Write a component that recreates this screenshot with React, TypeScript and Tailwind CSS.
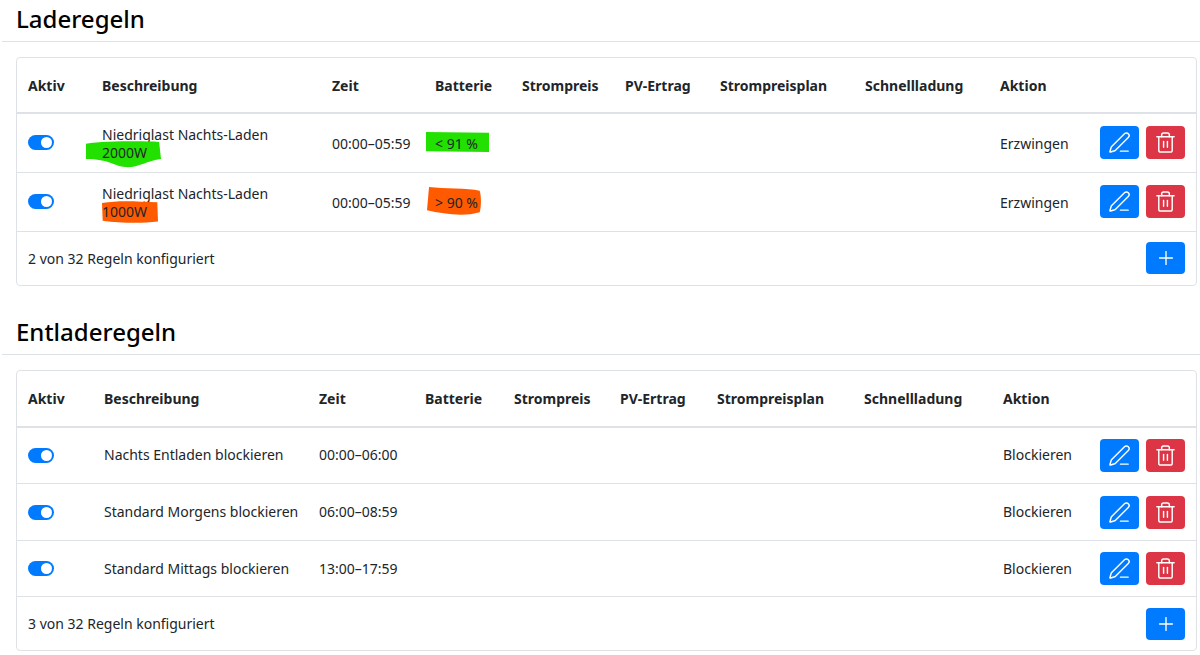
import { PenLine, Plus, Trash2 } from "lucide-react";
import type { ReactNode } from "react";

const Toggle = () => (
  <div className="flex h-[15px] w-[26px] items-center justify-end rounded-full bg-[#007bff] pr-[2px]">
    <div className="h-[11px] w-[11px] rounded-full bg-white" />
  </div>
);

const Actions = () => (
  <div className="flex justify-end gap-[7px]">
    <button className="flex h-[33px] w-[39px] shrink-0 items-center justify-center rounded-[4px] bg-[#007bff] text-white">
      <PenLine size={23} strokeWidth={1.5} />
    </button>
    <button className="flex h-[33px] w-[39px] shrink-0 items-center justify-center rounded-[4px] bg-[#dc3545] text-white">
      <Trash2 size={23} strokeWidth={1.5} />
    </button>
  </div>
);

const Marker = ({ d, color, className }: { d: string; color: string; className: string }) => (
  <svg className={`absolute ${className}`} viewBox="0 0 80 30" preserveAspectRatio="none">
    <path d={d} fill={color} />
  </svg>
);

const headers = ["Aktiv", "Beschreibung", "Zeit", "Batterie", "Strompreis", "PV-Ertrag", "Strompreisplan", "Schnellladung", "Aktion", ""];

interface Rule {
  desc: ReactNode;
  time: string;
  battery?: ReactNode;
  action: string;
  rowClass: string;
}

const RuleTable = ({
  cols,
  headClass,
  textClass,
  rows,
  footer,
}: {
  cols: string[];
  headClass: string;
  textClass: string;
  rows: Rule[];
  footer: string;
}) => (
  <div className="ml-4 mr-[3px] rounded-[4px] border border-[#dee2e6]">
    <table className="w-full table-fixed border-collapse">
      <colgroup>
        {cols.map((c, i) => (
          <col key={i} className={c} />
        ))}
      </colgroup>
      <thead>
        <tr className={`border-b-2 border-[#dee2e6] ${headClass}`}>
          {headers.map((h, i) => (
            <th key={i} className="whitespace-nowrap px-[11px] pt-[2px] text-left align-middle font-bold">
              {h}
            </th>
          ))}
        </tr>
      </thead>
      <tbody>
        {rows.map((r, i) => (
          <tr key={i} className={`border-b border-[#dee2e6] ${r.rowClass}`}>
            <td className="px-[11px] align-middle">
              <Toggle />
            </td>
            <td className={`whitespace-nowrap px-[11px] align-middle ${textClass}`}>{r.desc}</td>
            <td className={`whitespace-nowrap px-[11px] align-middle ${textClass}`}>{r.time}</td>
            <td className={`whitespace-nowrap px-[11px] align-middle ${textClass}`}>{r.battery}</td>
            <td />
            <td />
            <td />
            <td />
            <td className={`px-[11px] align-middle ${textClass}`}>{r.action}</td>
            <td className="px-[11px] align-middle">
              <Actions />
            </td>
          </tr>
        ))}
      </tbody>
    </table>
    <div className="flex h-[53px] items-center justify-between px-[11px]">
      <span className={textClass}>{footer}</span>
      <button className="flex h-[32px] w-[39px] items-center justify-center rounded-[4px] bg-[#007bff] text-white">
        <Plus size={22} strokeWidth={1.5} />
      </button>
    </div>
  </div>
);

export default function App() {
  return (
    <div className="h-[655px] overflow-hidden bg-white text-[14px] leading-[18px] text-[#212529] [font-family:'Noto_Sans',sans-serif]">
      {/* Laderegeln */}
      <h2 className="ml-[2px] h-[42px] border-b border-[#dee2e6] pl-[14px] text-[24px] leading-[38px] font-medium text-black">
        Laderegeln
      </h2>
      <div className="h-[15px]" />
      <RuleTable
        cols={["w-[74px]", "w-[230px]", "w-[103px]", "w-[87px]", "w-[103px]", "w-[95px]", "w-[145px]", "w-[135px]", "w-[100px]", ""]}
        headClass="h-[55px]"
        textClass="pt-[2px]"
        footer="2 von 32 Regeln konfiguriert"
        rows={[
          {
            desc: (
              <div>
                Niedriglast Nachts-Laden
                <div className="relative">
                  <Marker
                    className="left-[-16px] top-[-3px] h-[27px] w-[75px]"
                    color="#22e000"
                    d="M0 3 C20 0 60 0 78 1 L80 20 C65 22 55 30 42 29 C30 28 25 20 0 20 Z"
                  />
                  <span className="relative">2000W</span>
                </div>
              </div>
            ),
            time: "00:00–05:59",
            battery: (
              <div className="relative">
                <Marker
                  className="left-[-9px] top-[-3px] h-[20px] w-[63px]"
                  color="#22e000"
                  d="M0 0 L80 1 L80 30 L0 29 Z"
                />
                <span className="relative">&lt; 91 %</span>
              </div>
            ),
            action: "Erzwingen",
            rowClass: "h-[59px]",
          },
          {
            desc: (
              <div>
                Niedriglast Nachts-Laden
                <div className="relative">
                  <Marker
                    className="left-0 top-[-3px] h-[23px] w-[56px]"
                    color="#ff5a00"
                    d="M0 4 C25 0 50 2 79 3 L80 28 C55 31 25 30 1 27 Z"
                  />
                  <span className="relative">1000W</span>
                </div>
              </div>
            ),
            time: "00:00–05:59",
            battery: (
              <div className="relative">
                <Marker
                  className="left-[-8px] top-[-7px] h-[28px] w-[54px]"
                  color="#ff5a00"
                  d="M3 0 C25 2 60 1 78 4 C81 10 80 24 78 27 C55 32 25 29 0 25 Z"
                />
                <span className="relative">&gt; 90 %</span>
              </div>
            ),
            action: "Erzwingen",
            rowClass: "h-[59px]",
          },
        ]}
      />

      {/* Entladeregeln */}
      <h2 className="mt-[26px] ml-[2px] h-[43px] border-b border-[#dee2e6] pl-[14px] text-[24px] leading-[40px] font-medium text-black">
        Entladeregeln
      </h2>
      <div className="h-[15px]" />
      <RuleTable
        cols={["w-[76px]", "w-[215px]", "w-[106px]", "w-[89px]", "w-[106px]", "w-[97px]", "w-[147px]", "w-[139px]", "w-[100px]", ""]}
        headClass="h-[56px]"
        textClass=""
        footer="3 von 32 Regeln konfiguriert"
        rows={[
          { desc: "Nachts Entladen blockieren", time: "00:00–06:00", action: "Blockieren", rowClass: "h-[57px]" },
          { desc: "Standard Morgens blockieren", time: "06:00–08:59", action: "Blockieren", rowClass: "h-[57px]" },
          { desc: "Standard Mittags blockieren", time: "13:00–17:59", action: "Blockieren", rowClass: "h-[56px]" },
        ]}
      />
    </div>
  );
}
